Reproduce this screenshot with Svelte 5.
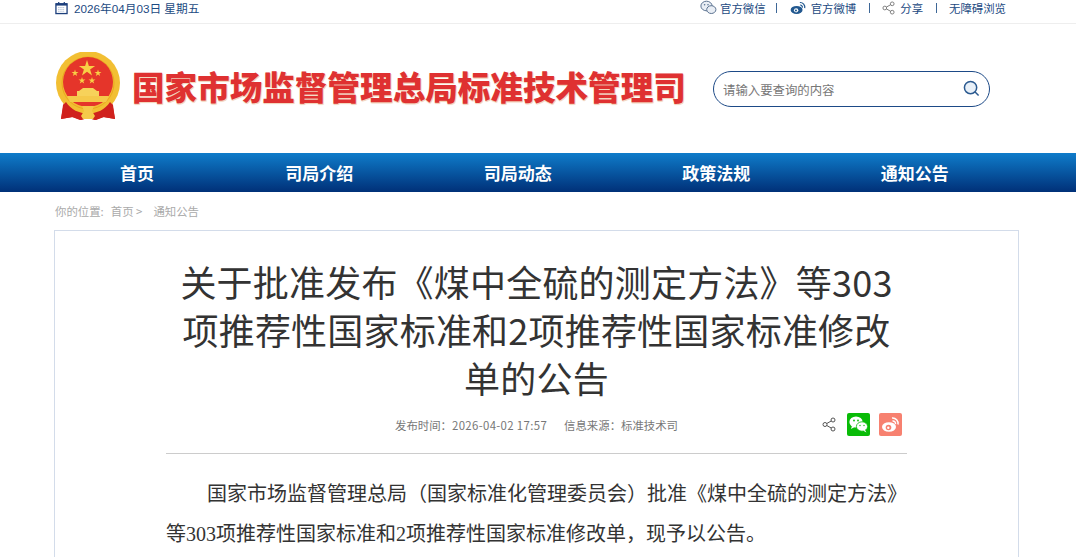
<script>
  const nav = ['首页', '司局介绍', '司局动态', '政策法规', '通知公告'];
</script>

<div class="page">
  <div class="topbar">
    <div class="shell top-inner">
      <div class="date">
        <svg class="cal" viewBox="0 0 14 14" width="13" height="14"><rect x="1" y="2.500" width="12" height="10.500" fill="none" stroke="#1c3f7c" stroke-width="1.400"/><rect x="1" y="2" width="12" height="2.400" fill="#1c3f7c"/><path d="M4 .5v3M10 .5v3" stroke="#1c3f7c" stroke-width="1.300"/><path d="M3.500 6.500h7M3.500 8.500h7M3.500 10.500h7" stroke="#9fb0cb" stroke-width="1" stroke-dasharray="1.300 1"/></svg>
        <span>2026年04月03日 星期五</span>
      </div>
      <div class="links">
        <span class="lnk">
          <svg viewBox="0 0 17 15" width="17" height="15"><ellipse cx="6.500" cy="6" rx="5.600" ry="4.800" fill="#e9eef5" stroke="#5c7391"/><ellipse cx="11.300" cy="9.600" rx="4.600" ry="3.900" fill="#e9eef5" stroke="#5c7391"/><circle cx="4.600" cy="4.800" r=".8" fill="#5c7391"/><circle cx="8" cy="4.800" r=".8" fill="#5c7391"/></svg>
          官方微信
        </span>
        <i class="sep first"></i>
        <span class="lnk wide">
          <svg viewBox="0 0 17 15" width="16" height="14"><ellipse cx="7" cy="9.600" rx="6.400" ry="4.300" fill="#22588f"/><circle cx="6.500" cy="10" r="2.300" fill="#fff"/><circle cx="6.300" cy="10.200" r="1.100" fill="#22588f"/><path d="M10.500 1.600a5 5 0 0 1 5.200 6M10.800 4.300a2.400 2.400 0 0 1 2.400 2.800" fill="none" stroke="#22588f" stroke-width="1.300"/></svg>
          官方微博
        </span>
        <i class="sep"></i>
        <span class="lnk wide">
          <svg viewBox="0 0 14 15" width="13" height="14"><circle cx="3" cy="7.500" r="2" fill="none" stroke="#777"/><circle cx="11" cy="3" r="2" fill="none" stroke="#777"/><circle cx="11" cy="12" r="2" fill="none" stroke="#777"/><path d="M4.800 6.500l4.400-2.500M4.800 8.500l4.400 2.500" stroke="#777"/></svg>
          分享
        </span>
        <i class="sep"></i>
        <span class="lnk">无障碍浏览</span>
      </div>
    </div>
  </div>

  <header class="shell head">
    <div class="brand">
      <svg class="emblem" viewBox="0 0 66 70" width="66" height="70">
        <path d="M9 50L6 67l12-2 8 3 7-2 7 2 8-3 12 2-3-17z" fill="#cf1f1c"/>
        <circle cx="33" cy="31" r="32" fill="#f2bf33"/>
        <circle cx="33" cy="31" r="26" fill="none" stroke="#e9a91f" stroke-width="1"/>
        <circle cx="33" cy="30" r="25" fill="#e5352a"/>
        <path d="M32 8l1.900 5.900h6.200l-5 3.700 1.900 5.900-5-3.700-5 3.700 1.900-5.900-5-3.700h6.200z" fill="#f8cf45"/>
        <path d="M20 17.500l.8 2.500h2.700l-2.200 1.600.9 2.500-2.200-1.500-2.200 1.500.9-2.500-2.200-1.600h2.700zM43 17.500l.8 2.500h2.700l-2.200 1.600.9 2.500-2.200-1.500-2.200 1.500.9-2.500-2.200-1.600h2.700zM27 25l.8 2.500h2.700l-2.200 1.600.9 2.500-2.200-1.500-2.200 1.500.9-2.500-2.200-1.600h2.700zM37 25l.8 2.500h2.700l-2.200 1.600.9 2.500-2.200-1.500-2.200 1.500.9-2.500-2.200-1.600h2.700z" fill="#f8cf45"/>
        <path d="M24 39l4-3h10l4 3zM22 39h22v5H22z" fill="#f7d25a"/>
        <path d="M12 44h42l-3 6H15z" fill="#f5c94a"/>
        <path d="M11 50c5 8 13 11 22 12 9-1 17-4 22-12l3 3 2 14-11-2-8 3-8-2-8 2-8-3-11 2 2-14z" fill="#d0211d"/>
        <path d="M27 54h12l-2 5 3 5-2 3H28l-2-3 3-5z" fill="#f5c94a"/>
      </svg>
      <div class="bt">国家市场监督管理总局标准技术管理司</div>
    </div>
    <div class="search">
      <span class="ph">请输入要查询的内容</span>
      <svg viewBox="0 0 18 18" width="17" height="17"><circle cx="8" cy="8" r="6.500" fill="#e8f0f8" stroke="#2b5a90" stroke-width="1.600"/><path d="M12.800 12.800l3.700 3.700" stroke="#2b5a90" stroke-width="1.600"/></svg>
    </div>
  </header>

  <nav class="nav">
    <div class="shell nav-inner">
      {#each nav as item}
        <a class="item">{item}</a>
      {/each}
    </div>
  </nav>

  <div class="shell crumb">
    <span>你的位置:</span><span>首页 &gt;</span><span>通知公告</span>
  </div>

  <main class="shell card">
    <div class="inner">
      <h1>关于批准发布《煤中全硫的测定方法》等303项推荐性国家标准和2项推荐性国家标准修改单的公告</h1>
      <div class="meta">
        <div class="meta-text"><span>发布时间：<span class="num">2026-04-02 17:57</span></span><span>信息来源：标准技术司</span></div>
        <div class="tools">
          <svg class="sh" viewBox="0 0 14 15" width="14" height="15"><circle cx="3" cy="7.500" r="2" fill="none" stroke="#555"/><circle cx="11" cy="3" r="2" fill="none" stroke="#555"/><circle cx="11" cy="12" r="2" fill="none" stroke="#555"/><path d="M4.800 6.500l4.400-2.500M4.800 8.500l4.400 2.500" stroke="#555"/></svg>
          <span class="btn wx">
            <svg viewBox="0 0 23 23" width="23" height="23"><ellipse cx="9" cy="9" rx="6.600" ry="5.600" fill="#fff"/><path d="M5 13l-1 3 3.500-2z" fill="#fff"/><ellipse cx="15" cy="13.500" rx="5.600" ry="4.700" fill="#fff" stroke="#09bb07" stroke-width=".8"/><path d="M18 17l1.500 2.500-3.500-2z" fill="#fff"/><circle cx="7" cy="7.500" r=".9" fill="#09bb07"/><circle cx="11" cy="7.500" r=".9" fill="#09bb07"/><circle cx="13" cy="12.500" r=".7" fill="#09bb07"/><circle cx="17" cy="12.500" r=".7" fill="#09bb07"/></svg>
          </span>
          <span class="btn wb">
            <svg viewBox="0 0 23 23" width="23" height="23"><ellipse cx="10" cy="14" rx="7" ry="4.800" fill="#fff"/><circle cx="9.500" cy="14.500" r="2.800" fill="#f78170"/><circle cx="9.300" cy="14.700" r="1.200" fill="#fff"/><path d="M13 5a5.500 5.500 0 0 1 6 6.500M13.500 8a2.700 2.700 0 0 1 3 3.200" fill="none" stroke="#fff" stroke-width="1.500"/></svg>
          </span>
        </div>
      </div>
      <div class="body">
        <p>国家市场监督管理总局（国家标准化管理委员会）批准《煤中全硫的测定方法》等303项推荐性国家标准和2项推荐性国家标准修改单，现予以公告。</p>
      </div>
    </div>
  </main>
</div>

<style>
  :global(html), :global(body) { margin: 0; overflow: hidden; background: #fff; }
  .page { height: 557px; overflow: hidden; font-family: "Noto Sans CJK SC", "Liberation Sans", sans-serif; }
  .shell { width: 965px; margin-left: 54px; box-sizing: border-box; }
  .topbar { height: 24px; border-bottom: 1px solid #eee; box-sizing: border-box; }
  .top-inner { display: flex; justify-content: space-between; align-items: center; height: 15px; color: #1c4a82; padding-right: 13px; }
  .date { display: flex; align-items: center; gap: 6px; padding-left: 1px; font-family: "Liberation Sans", "Noto Sans CJK SC", sans-serif; font-size: 11.700px; }
  .cal { display: block; }
  .links { display: flex; align-items: center; font-size: 11.400px; }
  .lnk { display: flex; align-items: center; gap: 3px; }
  .lnk.wide { gap: 5px; }
  .sep { width: 1px; height: 10px; background: #3d6797; margin: 0 12.500px; }
  .sep.first { margin-left: 10.500px; }
  .head { height: 129px; display: flex; justify-content: space-between; align-items: center; padding-right: 29px; }
  .brand { display: flex; align-items: center; gap: 11px; margin-top: -6px; }
  .emblem { display: block; margin-left: 1px; margin-top: 3px; }
  .bt { font-size: 32.600px; line-height: 40px; font-weight: 900; color: #df3131; white-space: nowrap; text-shadow: 1px 1px 0 #f3d8bf, 0 1px 1px #eec9b0; }
  .search { width: 277px; height: 36px; box-sizing: border-box; border: 1px solid #1d4a87; border-radius: 18px; display: flex; justify-content: space-between; align-items: center; padding: 0 9px 0 9px; font-size: 12.400px; color: #777; }
  .ph { padding-top: 3px; }
  .search svg { display: block; flex: none; }
  .nav { height: 39px; background: linear-gradient(#0f7cca, #003078); }
  .nav-inner { display: flex; height: 100%; }
  .item { flex: 198.500px 0 0; text-align: center; color: #fff; font-size: 17px; font-weight: 700; line-height: 40px; }
  .item:first-child { flex-basis: 166px; }
  .crumb { height: 38px; display: flex; gap: 7px; align-items: center; font-size: 11.400px; color: #aaa; padding: 0 0 1px 1px; }
  .crumb span:last-child { margin-left: 4px; }
  .card { border: 1px solid #d3dcea; border-bottom: 0; height: 400px; padding: 0 111px; }
  .inner { display: flex; flex-direction: column; }
  h1 { margin: 26px 0 0; padding: 0 10px; font-size: 36px; letter-spacing: .2px; line-height: 48px; font-weight: 400; color: #333; text-align: center; }
  .meta { height: 49px; margin-top: 3px; border-bottom: 1px solid #ccc; display: flex; align-items: center; justify-content: flex-end; position: relative; padding-right: 5px; }
  .meta-text { position: absolute; left: 0; right: 0; top: 13px; display: flex; justify-content: center; gap: 17px; font-size: 11.400px; color: #777; }
  .num { letter-spacing: .35px; }
  .tools { display: flex; align-items: center; gap: 9px; margin-top: -9px; }
  .sh { margin-right: 2px; }
  .btn { width: 23px; height: 23px; border-radius: 2px; display: block; }
  .btn svg { display: block; }
  .wx { background: #09bb07; }
  .wb { background: #f78170; }
  .body { margin-top: 20px; font-size: 20px; line-height: 40px; color: #333; font-family: "Liberation Serif", "Noto Sans CJK SC", serif; }
  .body p { margin: 0; text-indent: 41px; }
</style>
